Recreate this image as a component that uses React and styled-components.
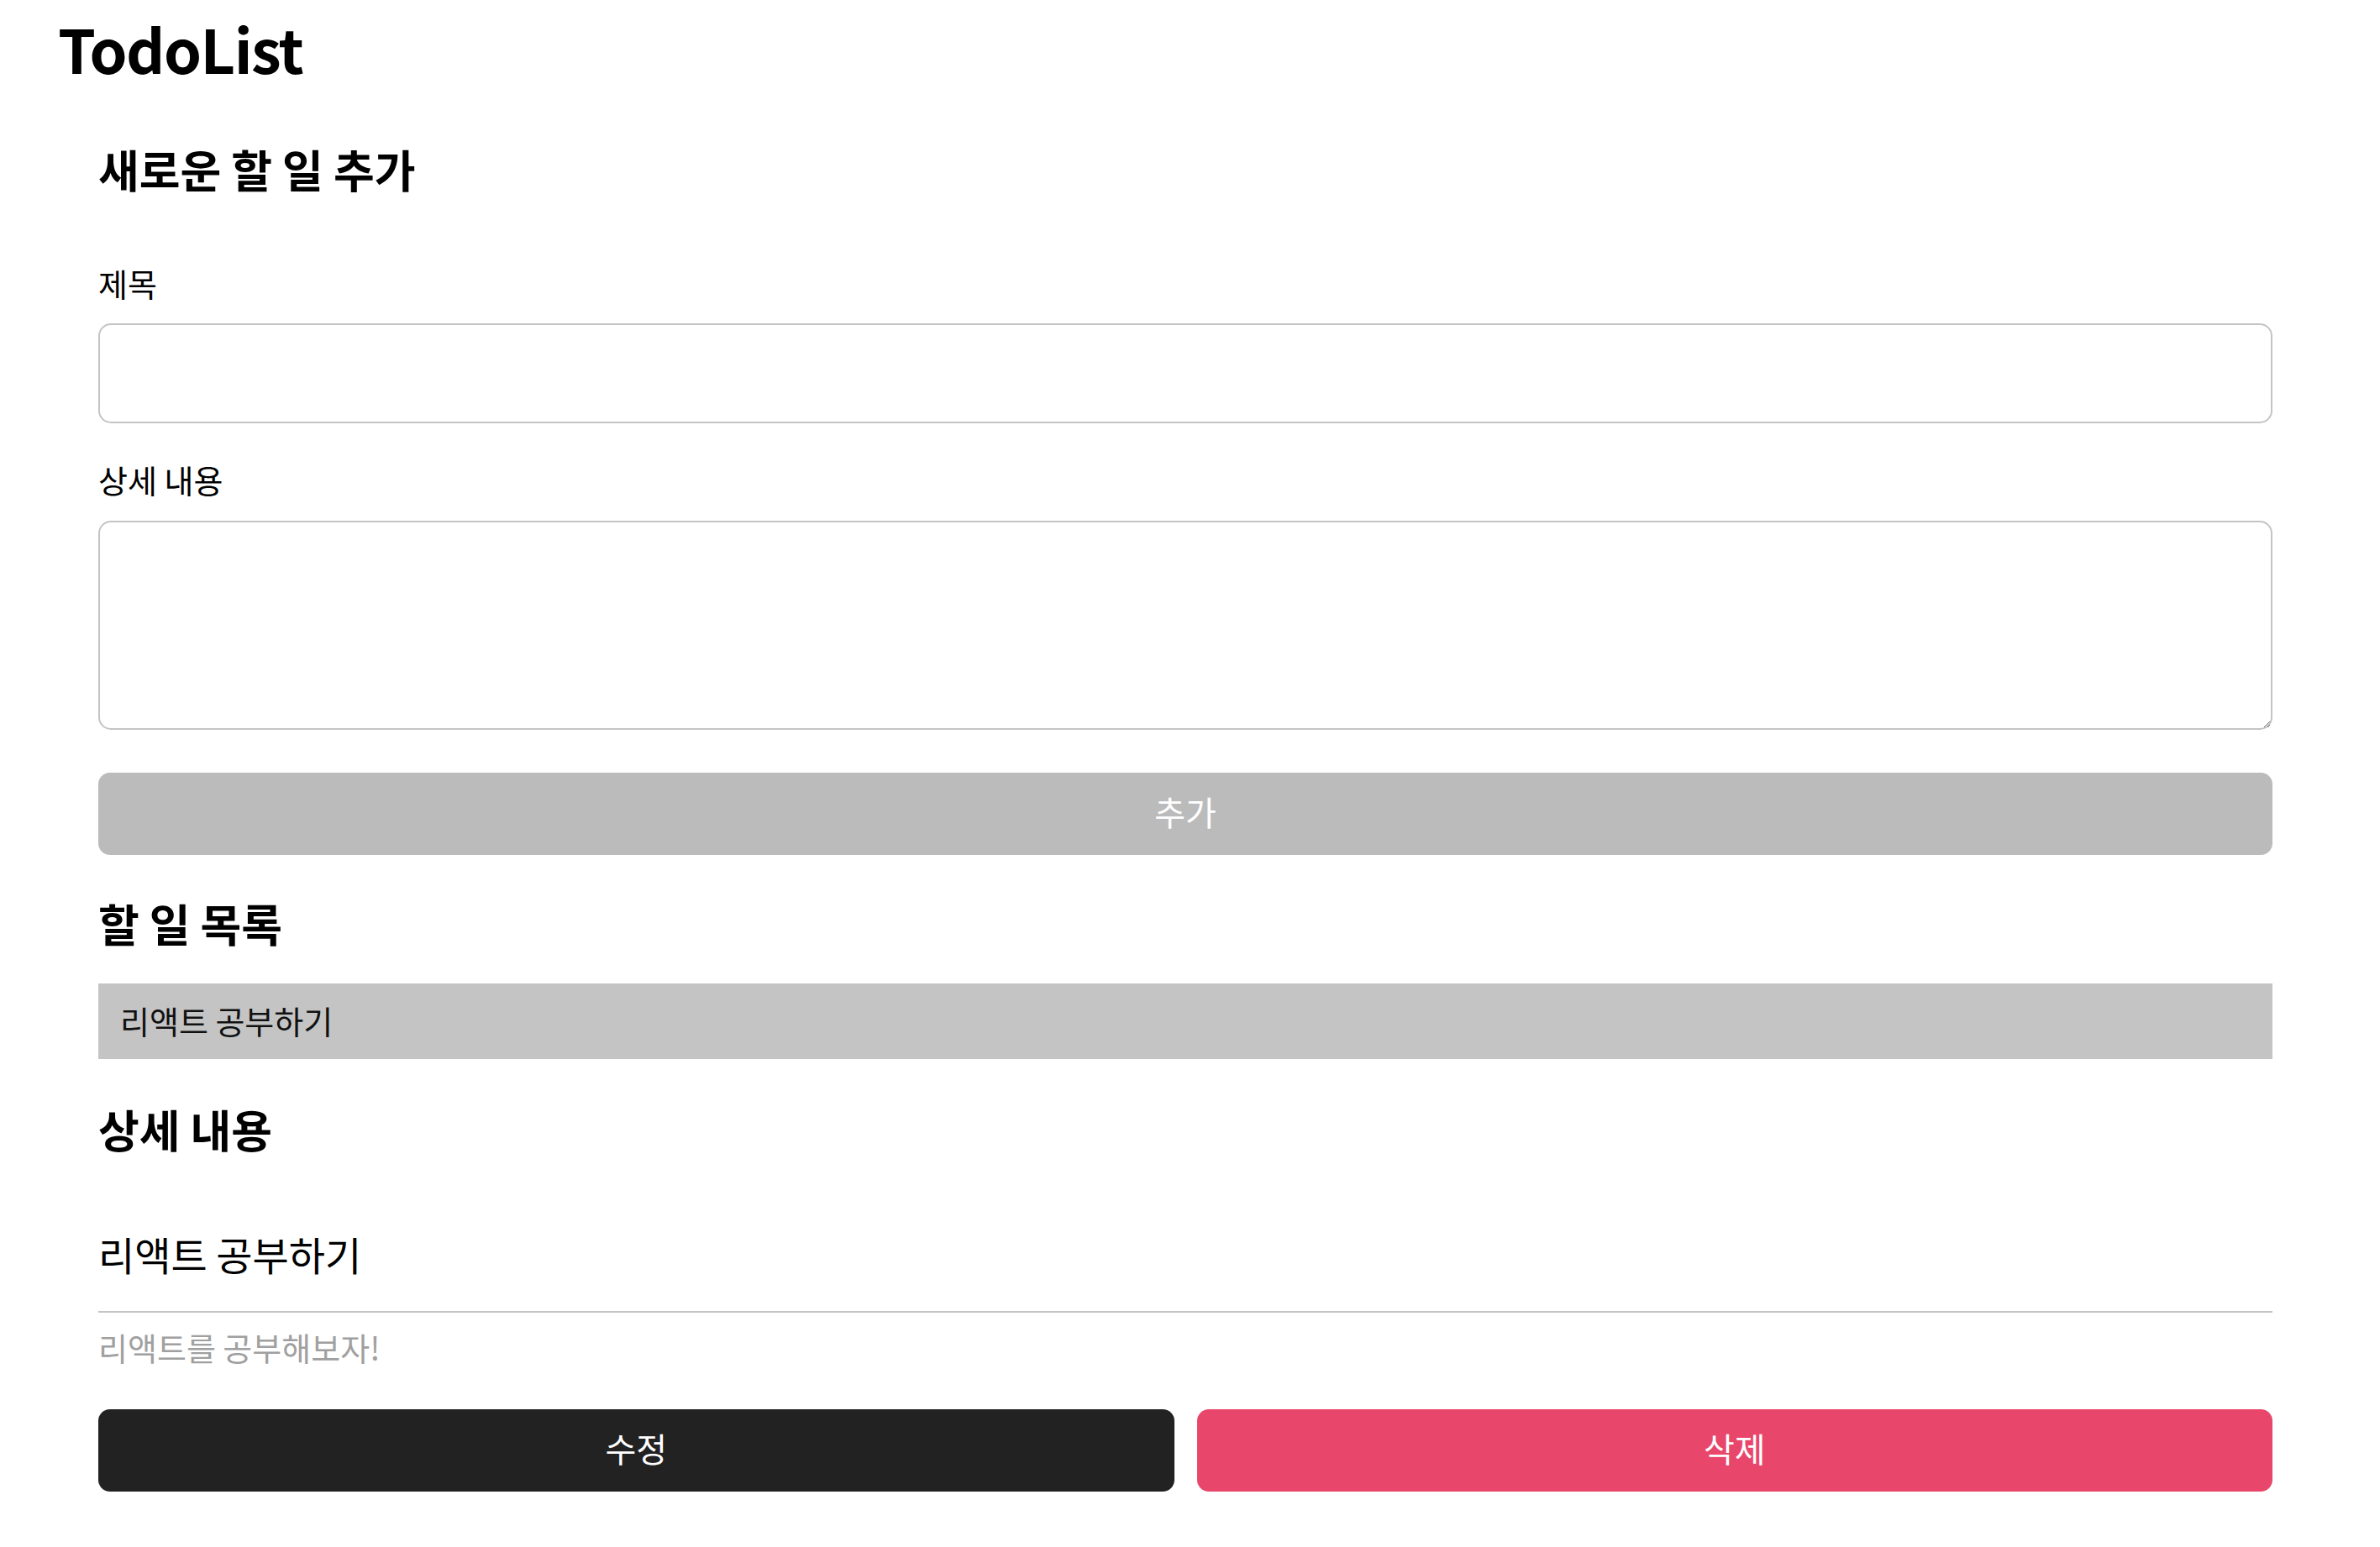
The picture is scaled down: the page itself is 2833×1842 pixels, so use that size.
import React from 'react';
import styled, { createGlobalStyle } from 'styled-components';

const GlobalStyle = createGlobalStyle`
    * {
        box-sizing: border-box;
    }

    body {
        margin: 0;
        background: #ffffff;
        font-family: "Noto Sans CJK KR", "Noto Sans", sans-serif;
        color: #000000;
    }
`;

const Page = styled.div`
    display: flex;
    flex-direction: column;
    padding: 11px 128px 60px 117px;
`;

const Title = styled.h1`
    margin: 0 0 0 -48px;
    font-size: 72px;
    line-height: 91px;
    font-weight: 700;
    letter-spacing: -1.5px;
`;

const Heading = styled.h2`
    margin: ${props => props.mt}px 0 0 0;
    font-size: 53px;
    line-height: 59px;
    font-weight: 700;
`;

const Label = styled.label`
    display: block;
    margin-top: ${props => props.mt}px;
    font-size: 38px;
    line-height: 41px;
`;

const Input = styled.input`
    display: block;
    width: 100%;
    height: 119px;
    margin-top: 28px;
    padding: 0 24px;
    border: 2px solid #c4c4c4;
    border-radius: 15px;
    font-family: inherit;
    font-size: 34px;
    outline: none;
`;

const TextArea = styled.textarea`
    display: block;
    width: 100%;
    height: 249px;
    margin-top: 29px;
    padding: 20px 24px;
    border: 2px solid #c4c4c4;
    border-radius: 15px;
    font-family: inherit;
    font-size: 34px;
    outline: none;
`;

const Button = styled.button`
    display: flex;
    align-items: center;
    justify-content: center;
    height: 98px;
    padding: 0 0 6px 0;
    border: none;
    border-radius: 14px;
    background-color: ${props => props.bg};
    color: #ffffff;
    font-family: inherit;
    font-size: 40px;
    cursor: pointer;
`;

const AddButton = styled(Button)`
    width: 100%;
    margin-top: 51px;
`;

const List = styled.ul`
    list-style: none;
    margin: 42px 0 0 0;
    padding: 0;
`;

const ListItem = styled.li`
    display: flex;
    align-items: center;
    height: 90px;
    padding: 0 26px 4px 26px;
    background-color: #c4c4c4;
    font-size: 38px;
    color: #111111;
`;

const DetailTitle = styled.p`
    margin: 93px 0 0 0;
    padding-bottom: 42px;
    border-bottom: 2px solid #c4c4c4;
    font-size: 47px;
    line-height: 52px;
`;

const DetailText = styled.p`
    margin: 20px 0 0 0;
    font-size: 38px;
    line-height: 41px;
    color: #a0a0a0;
`;

const ButtonRow = styled.div`
    display: grid;
    grid-template-columns: 1fr 1fr;
    gap: 27px;
    margin-top: 54px;
`;

const App = () => {
    return (
        <>
            <GlobalStyle />
            <Page>
                <Title>TodoList</Title>

                <Heading mt={70}>새로운 할 일 추가</Heading>

                <Label mt={85}>제목</Label>
                <Input type="text" />

                <Label mt={46}>상세 내용</Label>
                <TextArea />

                <AddButton bg="#bbbbbb">추가</AddButton>

                <Heading mt={52}>할 일 목록</Heading>
                <List>
                    <ListItem>리액트 공부하기</ListItem>
                </List>

                <Heading mt={54}>상세 내용</Heading>
                <DetailTitle>리액트 공부하기</DetailTitle>
                <DetailText>리액트를 공부해보자!</DetailText>

                <ButtonRow>
                    <Button bg="#222222">수정</Button>
                    <Button bg="#e8466a">삭제</Button>
                </ButtonRow>
            </Page>
        </>
    );
};

export default App;
